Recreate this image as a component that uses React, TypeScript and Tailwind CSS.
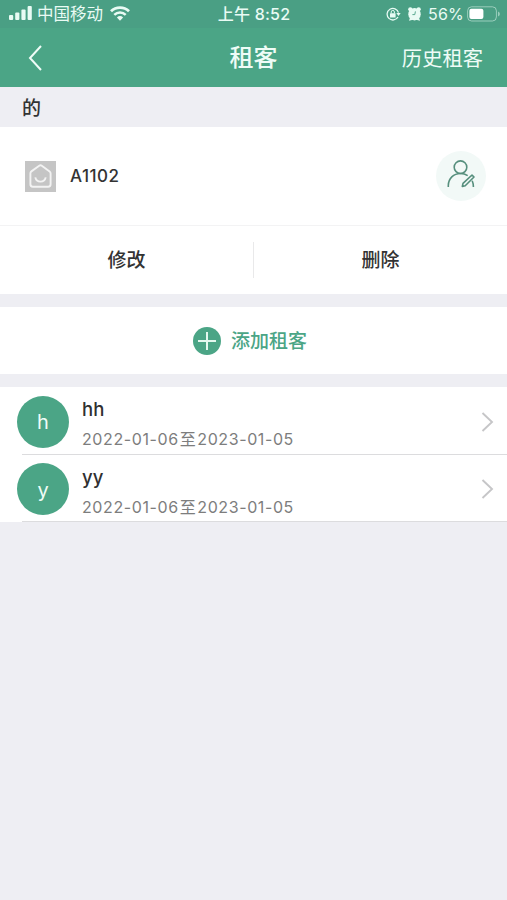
import type { ReactNode } from "react";

interface Tenant {
  name: string;
  start: string;
  end: string;
}

const tenants: Tenant[] = [
  { name: "hh", start: "2022-01-06", end: "2023-01-05" },
  { name: "yy", start: "2022-01-06", end: "2023-01-05" },
];

function StatusBar() {
  return (
    <div className="grid h-7 grid-cols-[1fr_auto_1fr] items-center bg-[#4a9f84] text-[#e9fbf4]">
      <div className="flex h-7 items-center pl-[9px]">
        <svg className="-mt-px" width="23" height="15" viewBox="0 0 23 15" fill="currentColor">
          <rect x="0" y="9" width="4.2" height="5" rx="1" />
          <rect x="6.2" y="6.5" width="4.2" height="7.5" rx="1" />
          <rect x="12.4" y="3.5" width="4.2" height="10.5" rx="1" />
          <rect x="18.6" y="0" width="4.2" height="14" rx="1" />
        </svg>
        <span className="ml-[5px] text-[16.5px] leading-7">中国移动</span>
        <svg className="-mt-px ml-[7px]" width="20" height="15" viewBox="0 0 20 15" fill="none" stroke="currentColor">
          <path d="M1 5.3a13 13 0 0 1 18 0" strokeWidth="2.8" />
          <path d="M4.3 8.9a8.2 8.2 0 0 1 11.4 0" strokeWidth="2.5" />
          <path d="M6.9 11.5a4.5 4.5 0 0 1 6.2 0L10 14.8Z" fill="currentColor" stroke="none" />
        </svg>
      </div>
      <div className="pl-px text-[16px] font-medium leading-7 tracking-[0.25px]">上午 8:52</div>
      <div className="flex h-7 items-center justify-end pr-[7px]">
        <svg width="15" height="14" viewBox="0 0 15 14" fill="none" stroke="currentColor" strokeWidth="1.3">
          <path d="M12.5 5.6A5.8 5.8 0 1 0 12 10" />
          <path d="M10.3 6h4.4l-2.2 3z" fill="currentColor" stroke="none" />
          <rect x="4" y="6.2" width="5.6" height="4.2" rx="0.5" fill="currentColor" stroke="none" />
          <path d="M5.2 6.4V5a1.6 1.6 0 0 1 3.2 0v1.4" strokeWidth="1" />
        </svg>
        <svg className="ml-[7px]" width="13" height="14" viewBox="0 0 13 14">
          <g fill="currentColor">
            <circle cx="2.3" cy="2.3" r="2.1" />
            <circle cx="10.7" cy="2.3" r="2.1" />
            <circle cx="6.5" cy="7.2" r="6.2" />
            <path d="m1 13.7 1.5-4.4 3.4 3.2zM12 13.7l-1.5-4.4-3.4 3.2z" />
          </g>
          <path d="M7.4 4.4 6.8 7.6H4.4" fill="none" stroke="#4a9f84" strokeWidth="0.9" />
        </svg>
        <span className="ml-[7px] text-[16px] leading-7 tracking-[0.2px]">56%</span>
        <svg className="-mt-px ml-[3px]" width="33" height="16" viewBox="0 0 33 16">
          <rect x="0.6" y="0.8" width="28.8" height="14.2" rx="4" fill="none" stroke="currentColor" strokeOpacity="0.5" />
          <rect x="2.4" y="2.8" width="14" height="10.2" rx="2" fill="#fff" />
          <path d="M31 5.5a2.6 2.6 0 0 1 0 5z" fill="currentColor" fillOpacity="0.5" />
        </svg>
      </div>
    </div>
  );
}

function NavBar() {
  return (
    <div className="grid h-[59px] grid-cols-[1fr_auto_1fr] items-center bg-[#4ba586] text-[#effcf7]">
      <svg className="ml-[28px]" width="15" height="28" viewBox="0 0 15 28" fill="none" stroke="currentColor" strokeWidth="2">
        <path d="M13 2 2 14l11 12" />
      </svg>
      <div className="text-[24px] font-medium leading-none">租客</div>
      <div className="pt-[4px] pr-[24px] text-right text-[20.3px] leading-none">历史租客</div>
    </div>
  );
}

function HouseIcon() {
  return (
    <svg className="shrink-0" width="31" height="31" viewBox="0 0 31 31" fill="none" stroke="#f3f3f3" strokeWidth="1.9">
      <rect width="31" height="31" fill="#c5c5c5" stroke="none" />
      <path d="M5.4 12.3q0-1.2 1-1.9l7.8-5.7q1.3-.9 2.6 0l7.8 5.7q1 .7 1 1.9v11q0 2.4-2.4 2.4H7.8q-2.4 0-2.4-2.4z" />
      <path d="M10.3 16.4c1.2 5.6 9.2 5.6 10.4 0" />
    </svg>
  );
}

function EditTenantButton() {
  return (
    <div className="flex h-[50px] w-[50px] items-center justify-center rounded-full bg-[#f2f9f7]">
      <svg className="-mt-[5px]" width="28" height="28" viewBox="0 0 28 28" fill="none" stroke="#568f7d" strokeWidth="1.6">
        <circle cx="13.5" cy="7.2" r="6.3" />
        <path d="M1.3 27v-1.4c0-7 5.3-12.1 12.2-12.1 2.8 0 5 .7 7.2 2.2" />
        <path d="m15.3 26.4.7-3 9-8.4 2 2-8.8 8.7z" strokeLinejoin="round" />
        <path d="M25.2 20.8q1.2 2.8 1.2 6.2" />
      </svg>
    </div>
  );
}

function Action({ children }: { children: ReactNode }) {
  return <div className="flex-1 pt-px text-center text-[19px] font-medium leading-none">{children}</div>;
}

function TenantRow({ tenant }: { tenant: Tenant }) {
  return (
    <div className="relative flex h-[67.5px] items-center bg-white pt-[2px] pr-[13px] pl-[17px]">
      <div className="flex h-[52px] w-[52px] items-center justify-center rounded-full bg-[#4ba586] pt-px text-[20px] text-[#effcf7]">
        {tenant.name[0]}
      </div>
      <div className="ml-[13px] flex-1 pt-[5px]">
        <div className="h-[30px] text-[18.5px] font-medium leading-[22px] text-[#303030]">{tenant.name}</div>
        <div className="flex h-[22px] items-center text-[16px] leading-[22px] tracking-[0.6px] text-[#7d7d7d]">
          {tenant.start}
          <span className="mx-px">至</span>
          {tenant.end}
        </div>
      </div>
      <svg width="13" height="20" viewBox="0 0 13 20" fill="none" stroke="#c6c6c8" strokeWidth="1.9">
        <path d="m1.5 1 9.5 9-9.5 9" />
      </svg>
      <div className="absolute right-0 bottom-0 left-[22px] h-px bg-[#dcdcde]" />
    </div>
  );
}

export default function App() {
  return (
    <div className="flex min-h-[900px] w-full flex-col bg-[#eeeef3] font-['Inter','Noto_Sans_CJK_SC',sans-serif] text-[#333]">
      <StatusBar />
      <NavBar />

      <div className="flex h-10 items-center pt-[3px] pl-[22px] text-[19px] font-medium leading-none">的</div>

      {/* Room card */}
      <div className="bg-white">
        <div className="flex h-[98px] items-center pr-[21px] pl-[25px]">
          <HouseIcon />
          <span className="ml-[14px] flex-1 pt-[2px] text-[17px] font-medium tracking-[0.5px]">A1102</span>
          <EditTenantButton />
        </div>
        <div className="flex h-[69px] items-center border-t border-[#f3f3f4]">
          <Action>修改</Action>
          <div className="h-[36px] w-px bg-[#e9e9ea]" />
          <Action>删除</Action>
        </div>
      </div>

      {/* Add tenant */}
      <div className="mt-[13px] flex h-[67px] items-center bg-white pl-[193px] text-[19px] font-medium text-[#4ba586]">
        <svg width="28" height="28" viewBox="0 0 28 28">
          <circle cx="14" cy="14" r="14" fill="#4ba586" />
          <path d="M14 5v18M5 14h18" stroke="#e4f8ef" strokeWidth="2" />
        </svg>
        <span className="ml-[10px] pt-[2px] leading-none">添加租客</span>
      </div>

      <div className="mt-[13px]">
        {tenants.map((tenant) => (
          <TenantRow key={tenant.name} tenant={tenant} />
        ))}
      </div>
    </div>
  );
}
